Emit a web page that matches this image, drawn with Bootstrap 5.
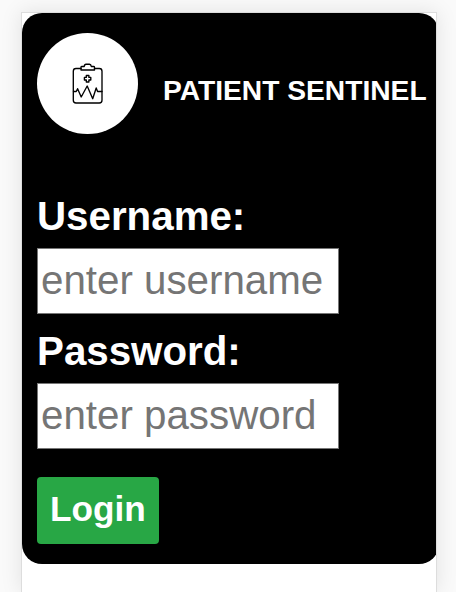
<!DOCTYPE html>
<html lang="en">
<head>
<meta charset="utf-8">
<meta name="viewport" content="width=device-width, initial-scale=1">
<title>Patient Sentinel</title>
<link href="https://cdn.jsdelivr.net/npm/bootstrap@5.3.0/dist/css/bootstrap.min.css" rel="stylesheet">
<style>
body{font-family:"Liberation Sans",Arial,sans-serif;background:#fafafa;height:592px;overflow:hidden;padding:12px 19px 0 21px}
.frame{width:416px;height:580px;border:1px solid #ddd;border-bottom:0;box-shadow:0 0 20px rgba(0,0,0,.1)}
.login-panel{width:417px;height:551px;border-radius:20px;padding:20px 15px}
.logo{width:101px;height:101px}
.brand{font-size:28.2px;line-height:32px;margin:12px 0 0 25px}
.login-form{padding-top:59px}
.field-label{font-size:40.3px;line-height:48px;margin-bottom:7px}
.field{width:302px;height:66px;font-size:40.3px;line-height:46px;border:1px solid #767676;padding:0 3px;margin-bottom:14px;border-radius:0}
.field::placeholder{color:#757575;opacity:1}
.login-btn{width:122px;height:67px;font-size:35.2px;line-height:42px;background:#28a745;border-radius:4px;margin-top:14px}
</style>
</head>
<body>
<main class="frame bg-white overflow-hidden">
  <section class="login-panel bg-black text-white">
    <header class="d-flex align-items-center">
      <div class="logo rounded-circle bg-white flex-shrink-0">
        <svg class="d-block" width="101" height="101" viewBox="37 33 101 101" fill="none" stroke="#000" stroke-width="1.35" stroke-linejoin="round" stroke-linecap="round" aria-hidden="true">
          <path d="M81 68.5H76Q73.3 68.5 73.3 71.2V100.3Q73.3 103 76 103H99.3Q102 103 102 100.3V71.2Q102 68.5 99.3 68.5H94.5"/>
          <path d="M81 70V67.2Q81 66.5 82 66.5H84.2Q84.5 64.2 86 64.2H89.5Q91 64.2 91.3 66.5H93.5Q94.5 66.5 94.5 67.2V70Z"/>
          <path d="M86.3 75.5H88.9V77.4H90.8V80H88.9V82H86.3V80H84.4V77.4H86.3Z"/>
          <path d="M73.5 91.5H76.2L77.6 88.7L81.2 97L87.2 86L92.7 98.7L96.2 88L97.6 91.5H102"/>
        </svg>
      </div>
      <h1 class="brand fw-bold text-nowrap">PATIENT SENTINEL</h1>
    </header>
    <form class="login-form d-flex flex-column align-items-start">
      <label class="field-label fw-bold" for="username">Username:</label>
      <input class="field bg-white" id="username" type="text" placeholder="enter username">
      <label class="field-label fw-bold" for="password">Password:</label>
      <input class="field bg-white" id="password" type="password" placeholder="enter password">
      <button class="login-btn btn border-0 p-0 pb-1 text-white fw-bold" type="button">Login</button>
    </form>
  </section>
</main>
<script src="https://cdn.jsdelivr.net/npm/bootstrap@5.3.0/dist/js/bootstrap.bundle.min.js"></script>
</body>
</html>
